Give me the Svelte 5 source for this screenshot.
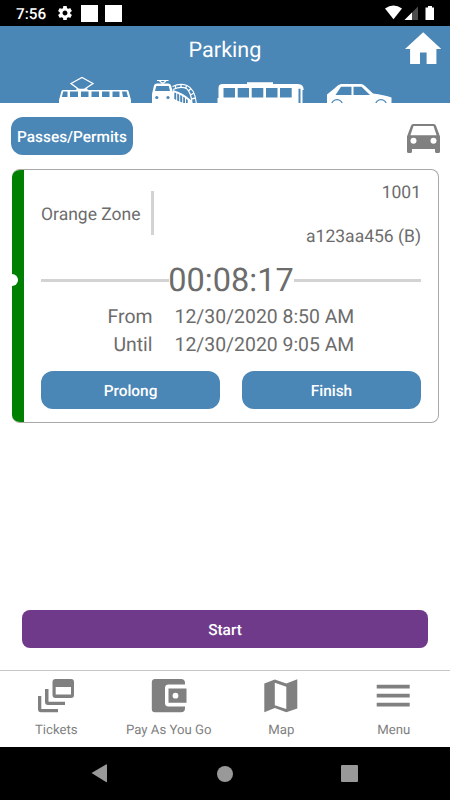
<script>
  const times = [
    { label: 'From', value: '12/30/2020 8:50 AM' },
    { label: 'Until', value: '12/30/2020 9:05 AM' }
  ];
  const tabs = [
    { label: 'Tickets', icon: 'tickets' },
    { label: 'Pay As You Go', icon: 'wallet' },
    { label: 'Map', icon: 'map' },
    { label: 'Menu', icon: 'menu' }
  ];
</script>

<div class="screen">
  <div class="status">
    <span class="clock">7:56</span>
    <svg class="gear" width="14" height="14" viewBox="2 2 20 20"><path fill="#fff" d="M19.43 12.98c.04-.32.07-.64.07-.98s-.03-.66-.07-.98l2.11-1.65c.19-.15.24-.42.12-.64l-2-3.46c-.12-.22-.39-.3-.61-.22l-2.49 1c-.52-.4-1.08-.73-1.69-.98l-.38-2.65C14.46 2.18 14.25 2 14 2h-4c-.25 0-.46.18-.49.42l-.38 2.65c-.61.25-1.17.59-1.69.98l-2.49-1c-.23-.09-.49 0-.61.22l-2 3.46c-.13.22-.07.49.12.64l2.11 1.65c-.04.32-.07.65-.07.98s.03.66.07.98l-2.11 1.65c-.19.15-.24.42-.12.64l2 3.46c.12.22.39.3.61.22l2.49-1c.52.4 1.08.73 1.69.98l.38 2.65c.03.24.24.42.49.42h4c.25 0 .46-.18.49-.42l.38-2.65c.61-.25 1.17-.59 1.69-.98l2.49 1c.23.09.49 0 .61-.22l2-3.46c.12-.22.07-.49-.12-.64l-2.11-1.65zM12 15.5c-1.93 0-3.500-1.570-3.500-3.500s1.570-3.500 3.500-3.500 3.500 1.570 3.500 3.500-1.570 3.500-3.500 3.500z" /></svg>
    <i class="box"></i><i class="box"></i>
    <svg class="signals" width="50" height="16" viewBox="385 5 50 16">
      <path fill="#fff" d="M385 8.500Q393.500 2.500 402 8.500L393.500 19.300z" />
      <path fill="#4d4d4d" d="M418 6.500V20H404.500z" />
      <path fill="#fff" d="M412 12.500V20H404.500z" />
      <path fill="#fff" d="M428 6h4v1.500h2V20h-8.500V7.500h2.500z" />
    </svg>
  </div>

  <header>
    <div class="titlebar">
      <span></span>
      <h1>Parking</h1>
      <svg width="36" height="32" viewBox="405 32 36 32"><path fill="#fff" d="M423.200 32.300L441.300 49H436.400V64H426.600V52.600H420V64H410.100V49H405z" /></svg>
    </div>
    <svg class="vehicles" width="340" height="28" viewBox="56 75 340 28">
      <g fill="none" stroke="#fff" stroke-width="1.300">
        <path d="M77 91V89.500H87V91M79 89.500L71 83.500 82 77.500 93 83.500 84 89.500" />
      </g>
      <path fill="#fff" fill-rule="evenodd" d="M59 103V100L61.500 91Q62 90 63 90H127Q128 90 128.500 91L131 100V103zM63.200 91.500L61.800 97H67.500V91.500zM70 91.500V97H78V91.500zM81 91.500V97H88.500V91.500zM91.500 91.500V97H99V91.500zM102 91.500V97H109.500V91.500zM112.500 91.500V97H119.500V91.500zM122 91.500L123 97H128L126.500 91.500z" />
      <path fill="none" stroke="#fff" stroke-width="1.200" d="M157 80.500H168.500M159.500 81L162.700 83.500 166 81" />
      <path fill="#fff" fill-rule="evenodd" d="M152 103V94L154 85.500Q154.500 83.500 157 83.500H168Q170.500 83.500 171 85.500L173.500 94V103zM156.300 86L155 91H170L168.800 86z" />
      <g fill="#4a86b6"><circle cx="156.800" cy="97.500" r="1.600" /><circle cx="168" cy="97.500" r="1.600" /></g>
      <path fill="#fff" d="M173 90Q183 92.500 192 101V103H173z" />
      <path fill="#4a86b6" d="M174.300 92.500L176.200 93V100L174.300 99zM177.200 93.500L179.200 94.500V101.500L177.200 100.500zM180.200 95L182.200 96V102.500L180.200 101.700zM183.200 96.800L185 97.800V103H183.200zM186 98.700L187.700 100V103H186z" />
      <path fill="none" stroke="#fff" stroke-width="1.200" d="M172.500 86.500Q180 83 187 85.500Q195 89 196.300 103M173 89.500Q181 86 186.500 88.500Q191 92 192 103" />
      <path fill="none" stroke="#fff" stroke-width="1.300" d="M175.500 85.500V88.500M181 84.500V87.500M186.500 86L185.500 88.500M191 88.500L188.500 91M194 93L190.500 95M195.500 98L191.500 99" />
      <path fill="#fff" fill-rule="evenodd" d="M217.500 103V98H218.500V88Q218.500 84 222.500 84H247V82.300H273V84H298Q303.700 84 303.700 90H302.500V103H300.500V88.800H298.500V103zM223.500 88V97.500H235V88zM237.700 88V97.500H249V88zM251.700 88V97.500H263.300V88zM266 88V97.500H277.500V88zM280 88V97.500H291.700V88z" />
      <path fill="#fff" fill-rule="evenodd" d="M327 103V94.500L335 88Q338 84.500 341 84H361Q363 84 365 86L373 93.500Q384 95 391.500 97.500V103zM341 86.700L335.500 95H351.500V86.700zM353.500 86.700V95H370L361.500 86.700z" />
      <g fill="#4a86b6"><circle cx="337" cy="105" r="6" /><circle cx="381" cy="105" r="6" /></g>
      <g fill="#fff"><circle cx="337" cy="105" r="4.800" /><circle cx="381" cy="105" r="4.800" /></g>
    </svg>
  </header>

  <main>
    <div class="toolbar">
      <button class="blue passes">Passes/Permits</button>
      <svg width="33" height="30" viewBox="0 0 33 30"><path fill="#808080" fill-rule="evenodd" d="M6.200 0H26.800Q28.500 0 29 1.700L33 12.500V27.500Q33 29 31.500 29H29.500Q28 29 28 27.500V25H5V27.500Q5 29 3.500 29H1.500Q0 29 0 27.500V12.500L4 1.700Q4.500 0 6.200 0zM6.500 2L3.400 11.200H29.600L26.500 2zM6.500 13.800a3 3 0 100 6 3 3 0 000-6M26.500 13.800a3 3 0 100 6 3 3 0 000-6" /></svg>
    </div>

    <section class="card">
      <div class="stripe"><i></i></div>
      <div class="details">
        <div class="summary">
          <div class="zone">Orange Zone</div>
          <div class="vehicle"><span>1001</span><span class="plate">a123aa456 (B)</span></div>
        </div>
        <div class="timer"><hr /><strong>00:08:17</strong><hr /></div>
        <div class="times">
          {#each times as row}
            <div class="time"><span class="label">{row.label}</span><span class="value">{row.value}</span></div>
          {/each}
        </div>
        <div class="actions">
          <button class="blue">Prolong</button>
          <button class="blue">Finish</button>
        </div>
      </div>
    </section>

    <button class="start">Start</button>
  </main>

  <nav>
    {#each tabs as tab}
      <div class="tab">
        <svg width="38" height="34" viewBox="0 0 38 34" fill="#808080">
          {#if tab.icon === 'tickets'}
            <path fill-rule="evenodd" d="M18.500 0H34Q37 0 37 3V16Q37 19 34 19H18.500Q15.500 19 15.500 16V3Q15.500 0 18.500 0zM18.700 8V15.500H34V8z" />
            <path d="M8 10H11.500V22.700H28V26H11Q8 26 8 23zM1 17H4.300V30H21V33.300H4Q1 33.300 1 30.300z" />
          {:else if tab.icon === 'wallet'}
            <path d="M5 0H31Q35 0 35 4V5.500H18.500Q15 5.500 15 9V24Q15 27.500 18.500 27.500H35V29Q35 33.300 31 33.300H5Q1.800 33.300 1.800 30V3.500Q1.800 0 5 0z" />
            <path fill-rule="evenodd" d="M18.500 9.500H36.500V23.700H18.500zM25.500 13.800a2.900 2.900 0 100 5.800 2.900 2.900 0 000-5.800" />
          {:else if tab.icon === 'map'}
            <path fill-rule="evenodd" d="M2.300 4.500L12.800.5 24.300 4.500 35.300.2V29.500L24.300 33.200 12.800 29 2.300 33.200zM12.800 3.800V26.200L24.300 30V7.700z" />
          {:else}
            <path d="M1.700 5.700H34.700V9.500H1.700zM1.700 14.700H34.700V18.500H1.700zM1.700 23.700H34.700V27.500H1.700z" />
          {/if}
        </svg>
        <span>{tab.label}</span>
      </div>
    {/each}
  </nav>

  <footer>
    <svg width="17" height="19" viewBox="0 0 17 19"><path fill="#999" d="M.5 9L15 .5Q16 0 16 1V17.500Q16 18.500 15 18z" /></svg>
    <i class="home"></i>
    <i class="recent"></i>
  </footer>
</div>

<style>
  :global(body) { margin: 0; background: #fff; }
  * { box-sizing: border-box; }
  .screen { width: 450px; height: 800px; display: flex; flex-direction: column; overflow: hidden; font-family: Roboto, sans-serif; color: #6c6c6c; white-space: nowrap; background: #fff; text-rendering: geometricPrecision; }
  svg { display: block; flex: none; }
  button { border: 0; padding: 1px 0 0; margin: 0; font: 500 15.400px Roboto, sans-serif; color: #fff; text-align: center; white-space: nowrap; text-rendering: inherit; }
  .status { height: 26px; background: #000; display: flex; align-items: center; padding: 0 15px 0 16px; flex: none; }
  .clock { color: #fff; font-size: 15.300px; line-height: 26px; font-weight: 500; width: 42px; padding-top: 2px; }
  .gear { margin-right: 9px; }
  .box { width: 17px; height: 17px; background: #fff; margin-right: 7px; margin-top: 1px; }
  .signals { margin-left: auto; }

  header { height: 77px; background: #4a86b6; display: flex; flex-direction: column; justify-content: space-between; flex: none; }
  .titlebar { display: grid; grid-template-columns: 36px 1fr 36px; align-items: center; padding: 5px 9px 0; height: 39px; }
  h1 { margin: 0; padding-top: 5px; color: #fff; font-size: 21.600px; line-height: 28px; font-weight: 400; text-align: center; }
  .vehicles { margin-left: 56px; }

  main { height: 567px; display: flex; flex-direction: column; padding: 14px 11px 22px; flex: none; }
  .toolbar { display: flex; justify-content: space-between; height: 38px; }
  .toolbar svg { margin: 7px -1px 0 0; }
  .blue { background: #4a86b6; height: 38px; border-radius: 12px; }
  .passes { width: 122px; }
  .card { display: flex; height: 254px; margin: 14px 0 0 .5px; border: 1.500px solid #a9a9a9; border-left: 0; border-radius: 8px; overflow: hidden; }
  .stripe { width: 12.500px; margin: -1px 0; background: #008000; display: flex; align-items: center; flex: none; }
  .stripe i { width: 6px; height: 12px; background: #fff; border-radius: 0 6px 6px 0; margin-top: -32px; }
  .details { flex: 1; padding: 0 17px; display: flex; flex-direction: column; }
  .summary { display: flex; justify-content: space-between; height: 88px; }
  .zone { width: 113px; height: 44px; line-height: 44px; padding-top: 2px; margin-top: 21px; border-right: 3px solid #d3d3d3; font-size: 17.500px; }
  .vehicle { display: flex; flex-direction: column; text-align: right; font-size: 17.500px; line-height: 44px; padding-top: 1px; }
  .timer { display: flex; align-items: center; height: 44px; }
  hr { flex: 1; height: 3px; border: 0; margin: 0; background: #d3d3d3; }
  strong { font-size: 32.500px; font-weight: 400; line-height: 44px; width: 125px; text-align: center; display: flex; justify-content: center; height: 44px; }
  .times { font-size: 19.400px; line-height: 27.500px; padding-top: 1px; height: 69px; }
  .time { display: flex; gap: 22px; }
  .time .label { width: 111.500px; text-align: right; }
  .actions { display: grid; grid-template-columns: 1fr 1fr; gap: 22px; }
  .start { height: 38px; margin: auto 11px 0; border-radius: 8px; background: #703a8b; flex: none; }

  nav { height: 77px; border-top: 1px solid #c5c5c5; display: grid; grid-template-columns: repeat(4, 1fr); flex: none; }
  .tab { display: flex; flex-direction: column; align-items: center; padding-top: 8px; font-size: 13.200px; line-height: 18px; color: #808080; gap: 9px; }
  footer { height: 53px; background: #000; display: flex; align-items: center; padding: 0 92px 0 91px; justify-content: space-between; flex: none; }
  .home { width: 16px; height: 16px; border-radius: 50%; background: #999; }
  .recent { width: 17px; height: 17px; border-radius: 1px; background: #999; }
</style>
